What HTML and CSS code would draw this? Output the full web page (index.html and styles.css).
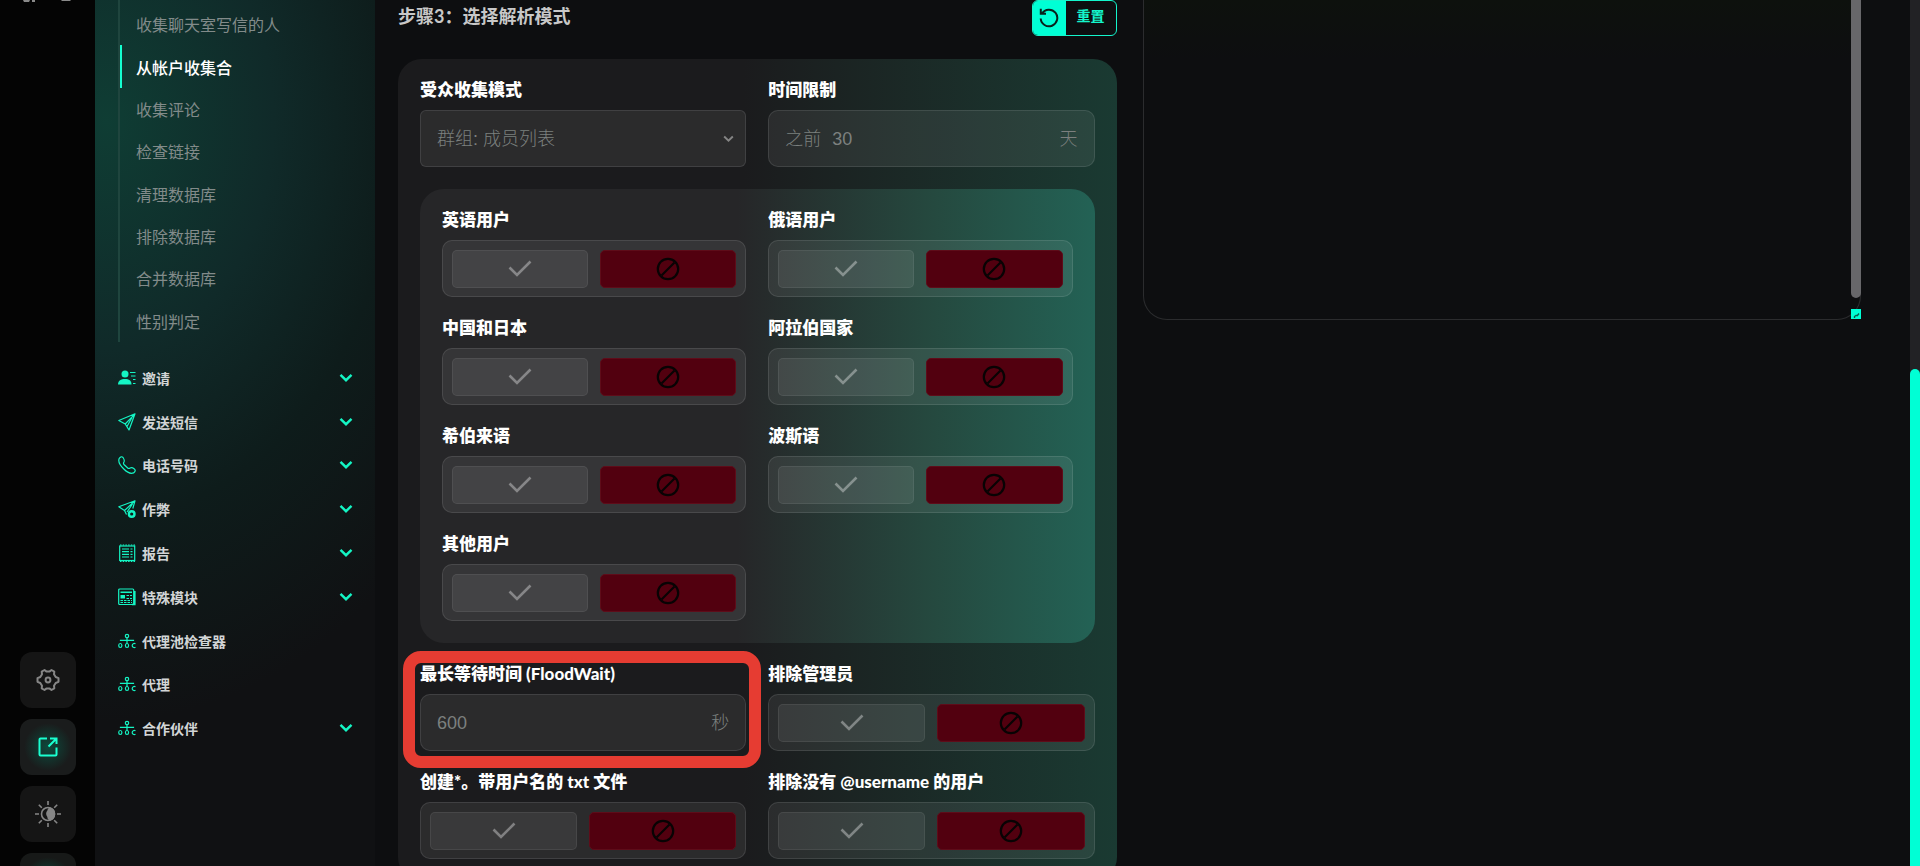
FILE: index.html
```
<!DOCTYPE html>
<html lang="zh-CN">
<head>
    <meta charset="UTF-8">
    <meta name="viewport" content="width=device-width, initial-scale=1.0">
    <title>从帐户收集合</title>
    <link rel="stylesheet" href="styles.css">
</head>
<body>
    <!-- Icons -->
    <svg class="sprite" aria-hidden="true">
        <symbol id="i-check" viewBox="0 0 24 24"><path d="M1.5 10.500 L9 18 L22.500 4.500" fill="none" stroke="currentColor" stroke-width="2.600"/></symbol>
        <symbol id="i-ban" viewBox="0 0 24 24"><circle cx="12" cy="12" r="10.200" fill="none" stroke="currentColor" stroke-width="2.200"/><path d="M5.500 18.500 L18.500 5.500" stroke="currentColor" stroke-width="2.200"/></symbol>
        <symbol id="i-chevron" viewBox="0 0 14 10"><path d="M1.500 1.800 L7 7.200 L12.500 1.800" fill="none" stroke="currentColor" stroke-width="2.400"/></symbol>
        <symbol id="i-user" viewBox="0 0 18 18"><circle cx="7" cy="5" r="3.500" fill="currentColor"/><path d="M0 15.500 C0 11.500 3 10 7 10 S13.500 11.500 13.500 15.500Z" fill="currentColor"/><path d="M12 3.500h5.500M13 7h4.500M15 10.500h2.500M15 14.500h2.500" stroke="currentColor" fill="none"/></symbol>
        <symbol id="i-plane" viewBox="0 0 18 18"><path d="M.800 7.500 L17 .800 L11 17 L7.200 11Z M17 .800 L7.200 11 M9 13.500 L14 4.500" fill="none" stroke="currentColor" stroke-width="1.200" stroke-linejoin="round"/></symbol>
        <symbol id="i-phone" viewBox="0 0 18 18"><path d="M1.200 2.500 C2.200 .500 4 .300 5 1.500 C6 3 6.800 4.500 6 5.800 C5.300 6.800 5 7.300 6 8.500 L9.700 12 C10.700 13 11.300 12.600 12.200 12 C13.500 11.200 15 12 16.400 13 C17.700 14 17.400 15.800 15.600 16.900 C12.600 18 8.500 15.800 5.800 13 C2.500 9.800 -.300 6 1.200 2.500Z" fill="none" stroke="currentColor" stroke-width="1.200"/></symbol>
        <symbol id="i-plane-add" viewBox="0 0 18 18"><path d="M8.500 14.500 L6.500 10.500 L.800 6.800 L17 .800 L14.800 8.500 M17 .800 L6.500 10.500 M9 12 L14.500 4" fill="none" stroke="currentColor" stroke-width="1.200" stroke-linejoin="round"/><circle cx="13.700" cy="14" r="2.800" fill="none" stroke="currentColor" stroke-width="2.400"/></symbol>
        <symbol id="i-report" viewBox="0 0 18 18"><rect x="1.700" y="2" width="15" height="14.500" fill="none" stroke="currentColor" stroke-width="1.200"/><path d="M2 1h15M2 17.300h15" stroke="currentColor" stroke-width="1.200" stroke-dasharray="1.500 1.200"/><path d="M4 5h7M4 7.700h7M4 10.300h7M4 13h7M12.500 5h2M12.500 7.700h2M12.500 10.300h2M12.500 13h2" stroke="currentColor" stroke-width="1.200"/></symbol>
        <symbol id="i-module" viewBox="0 0 18 18"><rect x=".700" y="1" width="15" height="15.500" rx="1" fill="none" stroke="currentColor" stroke-width="1.200"/><path d="M16.800 3v13.500h-3M2.500 4.200h11.500" fill="none" stroke="currentColor" stroke-width="1.600"/><path d="M2.500 7h4.500v3.500h-4.500z" fill="currentColor"/><path d="M8.500 7.500h5.500M8.500 10.500h5.500M2.500 12.500h11.500M2.500 14.500h11.500" stroke="currentColor" stroke-dasharray="2.500 1"/></symbol>
        <symbol id="i-tree" viewBox="0 0 18 18"><g fill="none" stroke="currentColor" stroke-width="1.200"><circle cx="9" cy="4" r="1.700"/><path d="M9 5.700v6M2.500 9V8.300h13V9"/><ellipse cx="2.300" cy="13.500" rx="1.600" ry="2"/><ellipse cx="9" cy="13.500" rx="1.600" ry="2"/><path d="M17.500 11.800 C16 11 14.200 11.700 14.200 13.500 S16 16 17.500 15.200"/></g></symbol>
    </svg>

    <div class="app">
        <aside class="rail">
            <svg class="rail-edge" width="56" height="3" viewBox="0 0 56 3" fill="#8a8a8a" aria-hidden="true"><path d="M3 0h7l-1 2h-5zM12 0h3v2h-3zM41 0h10l-1 1h-8z"/></svg>
            <button type="button" class="rail-btn" aria-label="设置">
                <svg width="24" height="24" viewBox="0 0 24 24" fill="none" stroke="currentColor" stroke-width="2" stroke-linejoin="round"><path d="M8.500 2 L10.300 3.400 H13.700 L15.500 2 L18.300 3.600 L18 6.300 L19.700 9 L22.500 10.200 V13.800 L19.700 15 L18 17.700 L18.300 20.400 L15.500 22 L13.700 20.600 H10.300 L8.500 22 L5.700 20.400 L6 17.700 L4.300 15 L1.500 13.800 V10.200 L4.300 9 L6 6.300 L5.700 3.600Z"/><circle cx="12" cy="12" r="2.400"/></svg>
            </button>
            <button type="button" class="rail-btn rail-btn-active" aria-label="打开">
                <svg width="20" height="20" viewBox="0 0 20 20" fill="none" stroke="currentColor" stroke-width="2"><path d="M9 1.500H2.500Q1.500 1.500 1.500 2.500V17.500Q1.500 18.500 2.500 18.500H17.500Q18.500 18.500 18.500 17.500V10.500M12 1.500H18.500V7M18 2L10.500 9.500"/></svg>
            </button>
            <button type="button" class="rail-btn" aria-label="主题">
                <svg width="26" height="26" viewBox="0 0 26 26" fill="none" stroke="currentColor" stroke-width="1.600"><circle cx="13" cy="13" r="6.500"/><path d="M15 7.200 A6 6 0 0 1 15 18.800 A3.500 3.500 0 0 1 13 15.500 A4.500 4.500 0 0 1 13 10 A3.500 3.500 0 0 1 15 7.200Z" fill="currentColor"/><path d="M13 0v4M13 22v4M0 13h4M22 13h4M3.800 3.800l3 3M19.200 19.200l3 3M3.800 22.200l3-3M19.200 6.800l3-3"/></svg>
            </button>
            <button type="button" class="rail-btn rail-btn-glow" aria-label="更多"></button>
        </aside>

        <nav class="sidebar">
            <ul class="subnav">
                <li><a href="#">收集聊天室写信的人</a></li>
                <li><a href="#" class="active" aria-current="page">从帐户收集合</a></li>
                <li><a href="#">收集评论</a></li>
                <li><a href="#">检查链接</a></li>
                <li><a href="#">清理数据库</a></li>
                <li><a href="#">排除数据库</a></li>
                <li><a href="#">合并数据库</a></li>
                <li><a href="#">性别判定</a></li>
            </ul>
            <ul class="nav">
                <li><a href="#"><svg class="nav-icon"><use href="#i-user"/></svg><span>邀请</span><svg class="nav-arrow"><use href="#i-chevron"/></svg></a></li>
                <li><a href="#"><svg class="nav-icon"><use href="#i-plane"/></svg><span>发送短信</span><svg class="nav-arrow"><use href="#i-chevron"/></svg></a></li>
                <li><a href="#"><svg class="nav-icon"><use href="#i-phone"/></svg><span>电话号码</span><svg class="nav-arrow"><use href="#i-chevron"/></svg></a></li>
                <li><a href="#"><svg class="nav-icon"><use href="#i-plane-add"/></svg><span>作弊</span><svg class="nav-arrow"><use href="#i-chevron"/></svg></a></li>
                <li><a href="#"><svg class="nav-icon"><use href="#i-report"/></svg><span>报告</span><svg class="nav-arrow"><use href="#i-chevron"/></svg></a></li>
                <li><a href="#"><svg class="nav-icon"><use href="#i-module"/></svg><span>特殊模块</span><svg class="nav-arrow"><use href="#i-chevron"/></svg></a></li>
                <li><a href="#"><svg class="nav-icon"><use href="#i-tree"/></svg><span>代理池检查器</span></a></li>
                <li><a href="#"><svg class="nav-icon"><use href="#i-tree"/></svg><span>代理</span></a></li>
                <li><a href="#"><svg class="nav-icon"><use href="#i-tree"/></svg><span>合作伙伴</span><svg class="nav-arrow"><use href="#i-chevron"/></svg></a></li>
            </ul>
        </nav>

        <main class="main">
            <section class="step">
                <header class="step-header">
                    <h2>步骤3：选择解析模式</h2>
                    <button type="button" class="reset">
                        <span class="reset-icon"><svg width="20" height="20" viewBox="0 0 20 20" fill="none" stroke="currentColor" stroke-width="2"><path d="M3 5.500 A8.300 8.300 0 1 1 1.700 10.500M1.800 .800V5.800H7"/></svg></span>
                        <span class="reset-text">重置</span>
                    </button>
                </header>

                <form class="card">
                    <div class="grid">
                        <div class="field">
                            <label class="title" for="mode">受众收集模式</label>
                            <div class="select-wrap">
                                <select id="mode" class="box">
                                    <option>群组: 成员列表</option>
                                </select>
                                <svg class="select-arrow"><use href="#i-chevron"/></svg>
                            </div>
                        </div>
                        <div class="field">
                            <label class="title" for="days">时间限制</label>
                            <div class="box">
                                <span>之前</span>
                                <input type="text" id="days" value="30">
                                <span>天</span>
                            </div>
                        </div>
                    </div>

                    <div class="card-inner grid" id="languages"></div>

                    <div class="grid" id="options">
                        <div class="field highlight">
                            <label class="title" for="wait">最长等待时间 (FloodWait)</label>
                            <div class="box">
                                <input type="text" id="wait" value="600">
                                <span>秒</span>
                            </div>
                        </div>
                    </div>
                </form>
            </section>

            <section class="log">
                <textarea aria-label="日志" readonly></textarea>
                <div class="log-thumb"></div>
                <div class="log-grip"><svg width="10" height="10" viewBox="0 0 10 10"><path d="M3.500 9V7.500L5 6.500H6.500M8 4.500L6 7" stroke="#0a5c4e" stroke-width="1.400" fill="none"/></svg></div>
            </section>
        </main>

        <div class="page-scroll"><div class="page-thumb"></div></div>
    </div>

    <script>
        // Yes / no switches, all set to "no"
        const languages = ['英语用户', '俄语用户', '中国和日本', '阿拉伯国家', '希伯来语', '波斯语', '其他用户'];
        const options = ['排除管理员', '创建*。带用户名的 txt 文件', '排除没有 @username 的用户'];

        function addSwitches(parentId, names) {
            const parent = document.getElementById(parentId);
            names.forEach((name, i) => {
                const id = `${parentId}-${i}`;
                parent.insertAdjacentHTML('beforeend', `
                    <div class="field" role="radiogroup" aria-labelledby="${id}">
                        <div class="title" id="${id}">${name}</div>
                        <div class="switch">
                            <label class="choice yes">
                                <input type="radio" name="${id}" value="1" aria-label="是">
                                <svg><use href="#i-check"/></svg>
                            </label>
                            <label class="choice no">
                                <input type="radio" name="${id}" value="0" aria-label="否" checked>
                                <svg><use href="#i-ban"/></svg>
                            </label>
                        </div>
                    </div>`);
            });
        }

        addSwitches('languages', languages);
        addSwitches('options', options);
    </script>
</body>
</html>
```
FILE: styles.css
```
* {
    box-sizing: border-box;
}
body {
    margin: 0;
    background: #0d0e10;
    color: #fff;
    font-family: Lato, "Noto Sans CJK SC", sans-serif;
    overflow: hidden;
}
ul {
    list-style: none;
    margin: 0;
    padding: 0;
}
a {
    color: inherit;
    text-decoration: none;
}
button, input, select, textarea {
    font: inherit;
    color: inherit;
}
.sprite {
    display: none;
}
.app {
    display: flex;
    height: 100vh;
    overflow: hidden;
}

/* Icon rail */
.rail {
    flex: none;
    width: 95px;
    padding-left: 20px;
    background: #040404;
    display: flex;
    flex-direction: column;
    gap: 11px;
}
.rail-edge {
    flex: none;
    margin-bottom: 638px;
}
.rail-btn {
    flex: none;
    width: 56px;
    height: 56px;
    padding: 0;
    border: none;
    border-radius: 12px;
    background: #151515;
    color: #868686;
    display: flex;
    align-items: center;
    justify-content: center;
}
.rail-btn-active {
    color: #1affd0;
    background: radial-gradient(circle, #0d4a3d, #1a1c1c 60%);
}
.rail-btn-glow {
    background: radial-gradient(circle, #0d4a3d, #171918 60%);
}

/* Sidebar */
.sidebar {
    flex: none;
    width: 280px;
    padding: 0 22px;
    background:
        radial-gradient(ellipse 440px 600px at 4% 14%, #0f3d34 0%, #102a29 38%, #0e1c1b 66%, transparent 100%),
        #101113;
}
.subnav {
    height: 342px;
    margin-left: 1px;
    padding-top: 3px;
    border-left: 2px solid #1f453e;
    display: flex;
    flex-direction: column;
}
.subnav li {
    flex: 1;
    display: flex;
}
.subnav a {
    flex: 1;
    display: flex;
    align-items: center;
    padding-left: 14px;
    border-left: 2px solid transparent;
    color: #828b8a;
    font-size: 16px;
    font-weight: 400;
}
.subnav a.active {
    color: #fff;
    border-left-color: #14ffd0;
    font-weight: 500;
}
.nav {
    display: grid;
    grid-auto-rows: 1fr;
    height: 394px;
    margin-top: 14px;
}
.nav a {
    display: flex;
    align-items: center;
    gap: 6px;
    height: 100%;
    padding-left: 1px;
    color: #d2d5d6;
    font-size: 14px;
    font-weight: 700;
}
.nav-icon {
    width: 18px;
    height: 18px;
    color: #14f5c4;
}
.nav-arrow {
    width: 14px;
    height: 10px;
    margin-left: auto;
    color: #14f5c4;
}

/* Main area */
.main {
    flex: 1;
    display: grid;
    grid-template-columns: 1fr 1fr;
    gap: 26px;
    padding: 0 49px 0 23px;
    align-items: start;
}
.step-header {
    display: flex;
    align-items: flex-start;
    justify-content: space-between;
    height: 36px;
    margin-bottom: 23px;
}
.step-header h2 {
    margin: 0;
    font-size: 18px;
    line-height: 32px;
    font-weight: 700;
    color: #c8c8c8;
}
.reset {
    display: flex;
    height: 36px;
    padding: 0;
    border: 1px solid #14f5cc;
    border-radius: 6px;
    background: none;
    color: #14f5cc;
    overflow: hidden;
}
.reset-icon {
    width: 33px;
    height: 100%;
    background: #00ffd5;
    color: #08211c;
    display: flex;
    align-items: center;
    justify-content: center;
}
.reset-text {
    padding: 0 11px;
    font-size: 14px;
    line-height: 20px;
    margin-top: 5px;
    font-weight: 700;
}
.card {
    padding: 22px;
    border-radius: 24px;
    background: linear-gradient(90deg, #1b1b1d 48%, #1b2624 66%, #1a3a32 100%);
}
.card-inner {
    margin: 22px 0;
    padding: 22px;
    border-radius: 24px;
    background: linear-gradient(90deg, #262628 47%, #25493f 76%, #236255 100%);
}
.grid {
    display: grid;
    grid-template-columns: 1fr 1fr;
    gap: 22px;
}
.field {
    position: relative;
}
.title {
    display: block;
    margin-bottom: 12px;
    font-size: 17px;
    line-height: 17px;
    font-weight: 900;
    white-space: nowrap;
}
.box {
    display: flex;
    align-items: center;
    gap: 11px;
    width: 100%;
    height: 57px;
    padding: 0 16px;
    border: 1px solid rgba(255, 255, 255, 0.1);
    border-radius: 10px;
    background: rgba(255, 255, 255, 0.07);
    color: #7c807f;
    font-family: "Liberation Sans", "Noto Sans CJK SC", sans-serif;
    font-size: 18px;
    line-height: 24px;
    font-weight: 300;
}
.box input {
    flex: 1;
    min-width: 0;
    padding: 0;
    border: none;
    outline: none;
    background: none;
}
.select-wrap {
    position: relative;
}
select.box {
    display: block;
    appearance: none;
    border-radius: 6px;
}
.select-arrow {
    position: absolute;
    right: 12px;
    top: 25px;
    width: 11px;
    height: 8px;
    color: #858585;
    pointer-events: none;
}
.switch {
    display: grid;
    grid-template-columns: 1fr 1fr;
    align-content: center;
    gap: 12px;
    height: 57px;
    padding: 0 9px;
    border: 1px solid rgba(255, 255, 255, 0.1);
    border-radius: 10px;
    background: rgba(255, 255, 255, 0.07);
}
.choice {
    display: flex;
    align-items: center;
    justify-content: center;
    height: 38px;
    border: 1px solid rgba(255, 255, 255, 0.07);
    border-radius: 5px;
    background: rgba(255, 255, 255, 0.07);
    color: rgba(255, 255, 255, 0.36);
    cursor: pointer;
}
.choice input {
    appearance: none;
    width: 0;
    height: 0;
    margin: 0;
}
.choice svg {
    width: 24px;
    height: 24px;
}
.choice.no {
    background: #52000f;
    border-color: #5e0c19;
    color: #080304;
}
.highlight::after {
    content: "";
    position: absolute;
    top: -14px;
    right: -15px;
    bottom: -17px;
    left: -17px;
    border: 12px solid #e63c32;
    border-radius: 18px;
    pointer-events: none;
}

/* Log */
.log {
    position: relative;
    height: 320px;
}
.log textarea {
    display: block;
    width: 100%;
    height: 100%;
    border: 1px solid #2b2c2e;
    border-top: none;
    border-radius: 0 0 24px 24px;
    background: linear-gradient(#0d110d, #0d0e10 60px);
    resize: none;
    outline: none;
}
.log-thumb {
    position: absolute;
    top: 0;
    right: 0;
    width: 10px;
    height: 298px;
    border-radius: 0 0 5px 5px;
    background: #67676a;
}
.log-grip {
    position: absolute;
    right: 0;
    bottom: 1px;
    width: 10px;
    height: 10px;
    background: #00ffd5;
}
.log-grip svg {
    display: block;
}
.page-scroll {
    flex: none;
    width: 10px;
    padding-top: 369px;
    background: #222225;
}
.page-thumb {
    height: 100%;
    border-radius: 5px 5px 0 0;
    background: #00ffd5;
}
```
